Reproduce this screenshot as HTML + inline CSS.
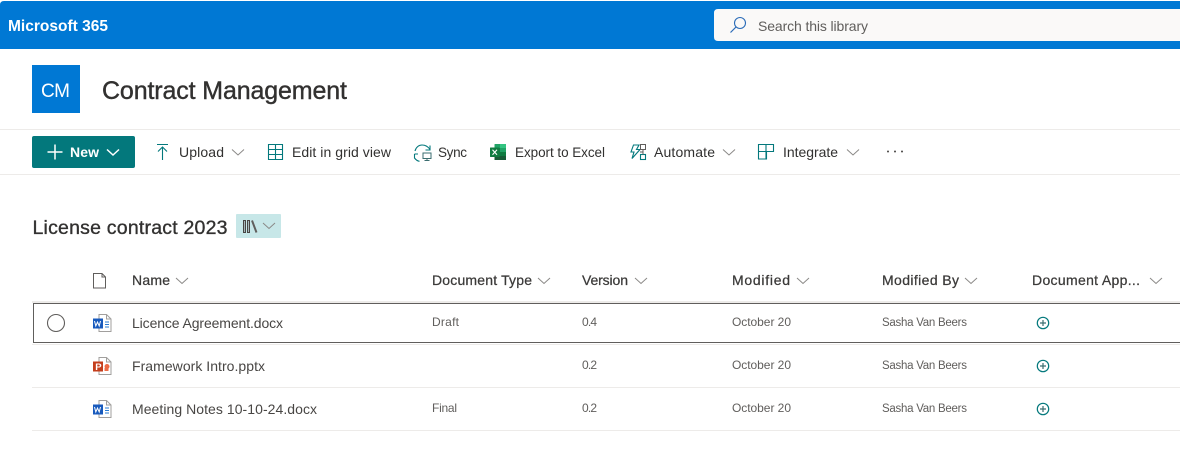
<!DOCTYPE html>
<html lang="en"><head><meta charset="utf-8"><title>Contract Management</title>
<style>
html,body{margin:0;padding:0;background:#fff;width:1180px;height:476px;overflow:hidden}
svg{display:block;position:absolute;left:0;top:0}
text{font-family:"Liberation Sans",sans-serif;font-size:14px;fill:#323130}
.s{font-size:12px;fill:#605e5c}
.n{font-size:11.5px;fill:#605e5c}
.h{font-size:14px;fill:#3b3a39;stroke:#3b3a39;stroke-width:.25}
.c{fill:none;stroke:#8a8886;stroke-width:1}
.t{fill:none;stroke:#03787c;stroke-width:1.1}
.d{fill:none;stroke:#605e5c;stroke-width:1}
</style></head><body>
<svg width="1180" height="476" viewBox="0 0 1180 476" xmlns="http://www.w3.org/2000/svg">
<defs>
<path id="ch" d="M0 0l6 5.500 6-5.500" class="c"/>
<g id="word">
<path d="M8.500 .5h7.500l4.500 4.500v12.500h-12z" fill="#fff" stroke="#a19f9d"/>
<path d="M16 .5v4.500h4.500" fill="none" stroke="#a19f9d"/>
<rect x="2.500" y="4.500" width="10" height="10" fill="#185abd"/>
<path d="M4 7l1.300 5 1.700-4 1.700 4 1.300-5" fill="none" stroke="#fff" stroke-width="1"/>
<path d="M14.500 8h4M14.500 10.500h4M14.500 13h4" stroke="#2b7cd3" stroke-width="1"/>
</g>
<g id="plus">
<circle cx="0" cy="0" r="5.700" fill="none" stroke="#03787c" stroke-width="1.200"/>
<path d="M-3 0h6M0-3v6" stroke="#3b6e70" stroke-width="1.200"/>
</g>
</defs>

<!-- top bar -->
<path d="M0 49V5q0-4 4-4h1176v48z" fill="#0078d4"/>
<text x="8" y="31" style="font-size:15.500px;fill:#fff;font-weight:700" textLength="100" lengthAdjust="spacing">Microsoft 365</text>
<path d="M1180 9H718q-4 0-4 4v24q0 4 4 4h462z" fill="#faf9f8"/>
<circle cx="740" cy="23" r="5.500" fill="none" stroke="#2b6cb8" stroke-width="1.100"/>
<path d="M736 27l-5.500 5.500" stroke="#2b6cb8" stroke-width="1.200" fill="none"/>
<text x="758" y="31" style="fill:#605e5c" textLength="110" lengthAdjust="spacing">Search this library</text>

<!-- site header -->
<rect x="32" y="65" width="48" height="48" fill="#0078d4"/>
<text x="41" y="97" style="font-size:19px;fill:#fff" textLength="29" lengthAdjust="spacing">CM</text>
<text x="102" y="99" style="font-size:25px;stroke:#323130;stroke-width:.4" textLength="245" lengthAdjust="spacing">Contract Management</text>

<!-- command bar -->
<rect x="0" y="129" width="1180" height="1" fill="#edebe9"/>
<rect x="0" y="174" width="1180" height="1" fill="#edebe9"/>
<rect x="32" y="136" width="103" height="32" rx="2" fill="#03787c"/>
<path d="M47.500 152h15M55 144.500v15" stroke="#fff" stroke-width="1.500" fill="none"/>
<text x="70" y="157" style="fill:#fff;font-weight:700" textLength="29" lengthAdjust="spacing">New</text>
<path d="M107 149.500l6 5.500 6-5.500" fill="none" stroke="#fff" stroke-width="1.500"/>

<path d="M157 144.500h11M162.500 160v-12.500M158 151.500l4.500-4.500 4.500 4.500" class="t"/>
<text x="179" y="157" textLength="45" lengthAdjust="spacing">Upload</text>
<use href="#ch" x="232" y="149.500"/>

<path d="M268.500 144.500h14v15h-14zM268.500 149.500h14M268.500 154.500h14M275.500 144.500v15" class="t"/>
<text x="292" y="157" textLength="99" lengthAdjust="spacing">Edit in grid view</text>

<path d="M415 151c1-4 4-6 7-6 3 0 6 1.500 8 4.500M430 145.500v4.500h-4.500M414.500 154h3.500M414.500 154v4c1.500 2 3 3 5 3.300" class="t"/>
<rect x="423" y="153" width="8" height="5.500" fill="none" stroke="#3b6e70" stroke-width="1"/>
<path d="M424.500 160.500h5M427 158.500v2" stroke="#3b6e70" stroke-width="1"/>
<text x="438" y="157" style="font-size:13.500px" textLength="29" lengthAdjust="spacing">Sync</text>

<path d="M495 144h10.500q.5 0 .5 .5v15q0 .5-.5 .5H495q-.5 0-.5-.5v-15q0-.5 .5-.5z" fill="#21a366"/>
<rect x="500" y="144" width="6" height="4" fill="#33c481"/>
<rect x="494.500" y="148" width="5.500" height="4" fill="#107c41"/>
<rect x="494.500" y="152" width="11.500" height="4" fill="#107c41"/>
<rect x="494.500" y="156" width="11.500" height="4" fill="#185c37"/>
<rect x="490" y="147.500" width="9.500" height="9.500" rx=".5" fill="#107c41"/>
<path d="M492.500 149.800l4.500 5M497 149.800l-4.500 5" stroke="#fff" stroke-width="1.100"/>
<text x="515" y="157" style="font-size:13.500px" textLength="90" lengthAdjust="spacing">Export to Excel</text>

<path d="M633.500 145h5.500l-2.500 4.500h3.500l-8 9 2-6.500h-3z" class="t"/>
<rect x="640.500" y="144.500" width="5" height="5" class="d"/>
<rect x="640.500" y="154.500" width="5" height="5" class="t"/>
<path d="M643 149.500v5M640 152h3" class="d"/>
<text x="654" y="157" textLength="61" lengthAdjust="spacing">Automate</text>
<use href="#ch" x="723" y="149.500"/>

<path d="M758.500 144.500h15v7h-15zM758.500 151.500v7.500h8v-7.500M766 144.500v14.500" class="t"/>
<text x="783" y="157" textLength="55" lengthAdjust="spacing">Integrate</text>
<use href="#ch" x="847" y="149.500"/>

<g fill="#484644"><circle cx="888" cy="151.500" r="1"/><circle cx="895" cy="151.500" r="1"/><circle cx="902" cy="151.500" r="1"/></g>

<!-- title -->
<text x="32.500" y="234" style="font-size:19.500px;stroke:#323130;stroke-width:.35" textLength="195" lengthAdjust="spacing">License contract 2023</text>
<rect x="236" y="214" width="45" height="24" rx="1" fill="#c7e7e8"/>
<path d="M243.500 220.500h2v12h-2zM247.500 220.500h2v12h-2z" fill="#a6b8b9" stroke="#484644" stroke-width="1"/>
<path d="M252 220.500l4.500 12" fill="none" stroke="#605e5c" stroke-width="2"/>
<use href="#ch" x="263" y="223"/>

<!-- table header -->
<path d="M93.500 273.500h8.500l3.500 3.500v11h-12zM102 273.500v3.500h3.500" fill="#fff" stroke="#605e5c" stroke-width="1"/>
<text class="h" x="132" y="285" textLength="38" lengthAdjust="spacing">Name</text><use href="#ch" x="176" y="278"/>
<text class="h" x="432" y="285" textLength="100" lengthAdjust="spacing">Document Type</text><use href="#ch" x="538" y="278"/>
<text class="h" x="582" y="285" textLength="46" lengthAdjust="spacing">Version</text><use href="#ch" x="635" y="278"/>
<text class="h" x="732" y="285" textLength="58" lengthAdjust="spacing">Modified</text><use href="#ch" x="797" y="278"/>
<text class="h" x="882" y="285" textLength="77" lengthAdjust="spacing">Modified By</text><use href="#ch" x="965" y="278"/>
<text class="h" x="1032" y="285" textLength="108" lengthAdjust="spacing">Document App...</text><use href="#ch" x="1150" y="278"/>
<rect x="32" y="301" width="1148" height="2" fill="#edebe9"/>

<!-- rows -->
<path d="M1180 303.500H33.500v39H1180" fill="#fff" stroke="#605e5c" stroke-width="1"/>
<rect x="32" y="344" width="1148" height="1" fill="#edebe9"/>
<rect x="32" y="387" width="1148" height="1" fill="#edebe9"/>
<rect x="32" y="430" width="1148" height="1" fill="#edebe9"/>

<circle cx="56" cy="323" r="8.500" fill="#fff" stroke="#605e5c" stroke-width="1.100"/>

<use href="#word" x="90.500" y="314"/>
<text x="132" y="328" style="fill:#484644" textLength="151" lengthAdjust="spacing">Licence Agreement.docx</text>
<text class="s" x="432" y="326" textLength="27" lengthAdjust="spacing">Draft</text>
<text class="s" x="582" y="326" textLength="15" lengthAdjust="spacing">0.4</text>
<text class="s" x="732" y="326" textLength="59" lengthAdjust="spacing">October 20</text>
<text class="n" x="882" y="326" textLength="85" lengthAdjust="spacing">Sasha Van Beers</text>
<use href="#plus" x="1043" y="323"/>

<g transform="translate(90.500 357)">
<path d="M8.500 .5h7.500l4.500 4.500v12.500h-12z" fill="#fff" stroke="#a19f9d"/>
<path d="M16 .5v4.500h4.500" fill="none" stroke="#a19f9d"/>
<rect x="2.500" y="4.500" width="10" height="10" fill="#c43e1c"/>
<text x="4.800" y="13" style="font-size:9.500px;font-weight:700;fill:#fff">P</text>
<circle cx="16.500" cy="9.500" r="2.500" fill="#ed6c47"/>
<rect x="14" y="11" width="4" height="3" fill="#ed6c47"/>
</g>
<text x="132" y="371" style="fill:#484644" textLength="133" lengthAdjust="spacing">Framework Intro.pptx</text>
<text class="s" x="582" y="369" textLength="15" lengthAdjust="spacing">0.2</text>
<text class="s" x="732" y="369" textLength="59" lengthAdjust="spacing">October 20</text>
<text class="n" x="882" y="369" textLength="85" lengthAdjust="spacing">Sasha Van Beers</text>
<use href="#plus" x="1043" y="366"/>

<use href="#word" x="90.500" y="400"/>
<text x="132" y="414" style="fill:#484644" textLength="185" lengthAdjust="spacing">Meeting Notes 10-10-24.docx</text>
<text class="s" x="432" y="412" textLength="25" lengthAdjust="spacing">Final</text>
<text class="s" x="582" y="412" textLength="15" lengthAdjust="spacing">0.2</text>
<text class="s" x="732" y="412" textLength="59" lengthAdjust="spacing">October 20</text>
<text class="n" x="882" y="412" textLength="85" lengthAdjust="spacing">Sasha Van Beers</text>
<use href="#plus" x="1043" y="409"/>
</svg>
</body></html>
